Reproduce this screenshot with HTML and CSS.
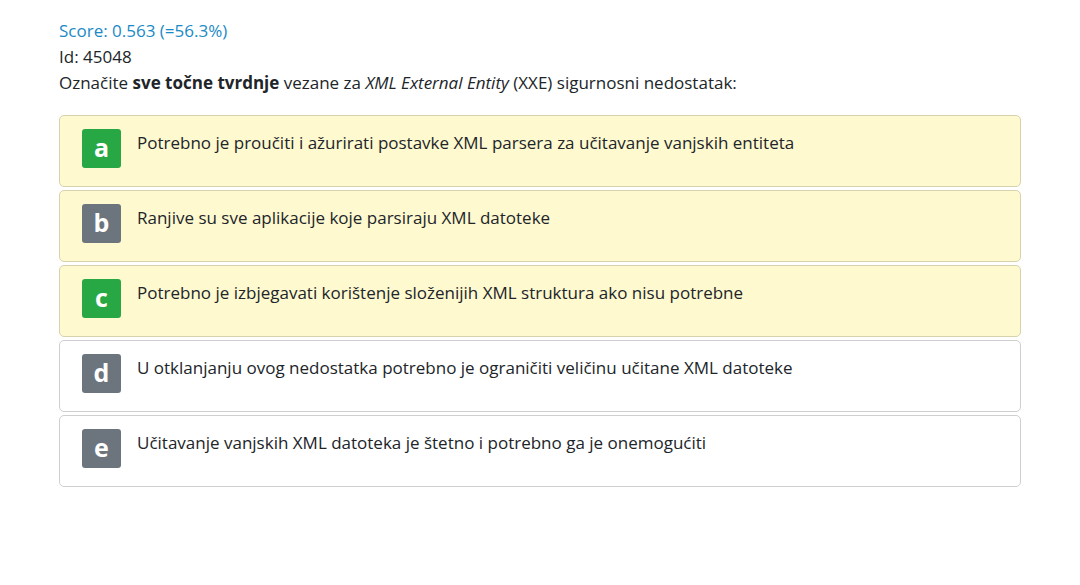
FILE: index.html
```html
<!DOCTYPE html>
<html lang="hr">
<head>
<meta charset="utf-8">
<link rel="stylesheet" href="styles.css">
</head>
<body>
<div class="page">
  <div class="score">Score: 0.563 (=56.3%)</div>
  <div class="meta">Id: 45048</div>
  <div class="question">Označite <b>sve točne tvrdnje</b> vezane za <i>XML External Entity</i> (XXE) sigurnosni nedostatak:</div>
  <div class="answers">
    <div class="answer marked">
      <span class="badge correct">a</span>
      <span class="text">Potrebno je proučiti i ažurirati postavke XML parsera za učitavanje vanjskih entiteta</span>
    </div>
    <div class="answer marked">
      <span class="badge">b</span>
      <span class="text">Ranjive su sve aplikacije koje parsiraju XML datoteke</span>
    </div>
    <div class="answer marked">
      <span class="badge correct">c</span>
      <span class="text">Potrebno je izbjegavati korištenje složenijih XML struktura ako nisu potrebne</span>
    </div>
    <div class="answer">
      <span class="badge">d</span>
      <span class="text">U otklanjanju ovog nedostatka potrebno je ograničiti veličinu učitane XML datoteke</span>
    </div>
    <div class="answer">
      <span class="badge">e</span>
      <span class="text">Učitavanje vanjskih XML datoteka je štetno i potrebno ga je onemogućiti</span>
    </div>
  </div>
</div>
</body>
</html>
```
FILE: styles.css
```css
html, body {
  margin: 0;
  padding: 0;
  background: #ffffff;
}
body {
  font-family: "Open Sans", "Noto Sans", sans-serif;
  font-size: 17px;
  color: #212529;
}
.page {
  padding: 18px 59px 0 59px;
  width: 962px;
}
.score {
  color: #1a8ac6;
  line-height: 26px;
}
.meta {
  line-height: 26px;
}
.question {
  line-height: 26px;
}
.question b { font-weight: 700; }
.answers {
  margin-top: 19px;
  display: flex;
  flex-direction: column;
  gap: 3px;
}
.answer {
  box-sizing: border-box;
  height: 72px;
  border: 1px solid #cfcfcf;
  border-radius: 5px;
  background: #ffffff;
  display: flex;
  align-items: flex-start;
  padding: 13px 16px 0 22px;
  gap: 16px;
}
.answer.marked {
  background: #fff9d0;
  border-color: #d6d2ae;
}
.badge {
  flex: none;
  width: 39px;
  height: 39px;
  border-radius: 3px;
  background: #6c757d;
  color: #fff;
  font-weight: 700;
  font-size: 25px;
  line-height: 37px;
  text-align: center;
}
.badge.correct {
  background: #28a745;
}
.text {
  line-height: 26px;
  padding-top: 1px;
}
```
